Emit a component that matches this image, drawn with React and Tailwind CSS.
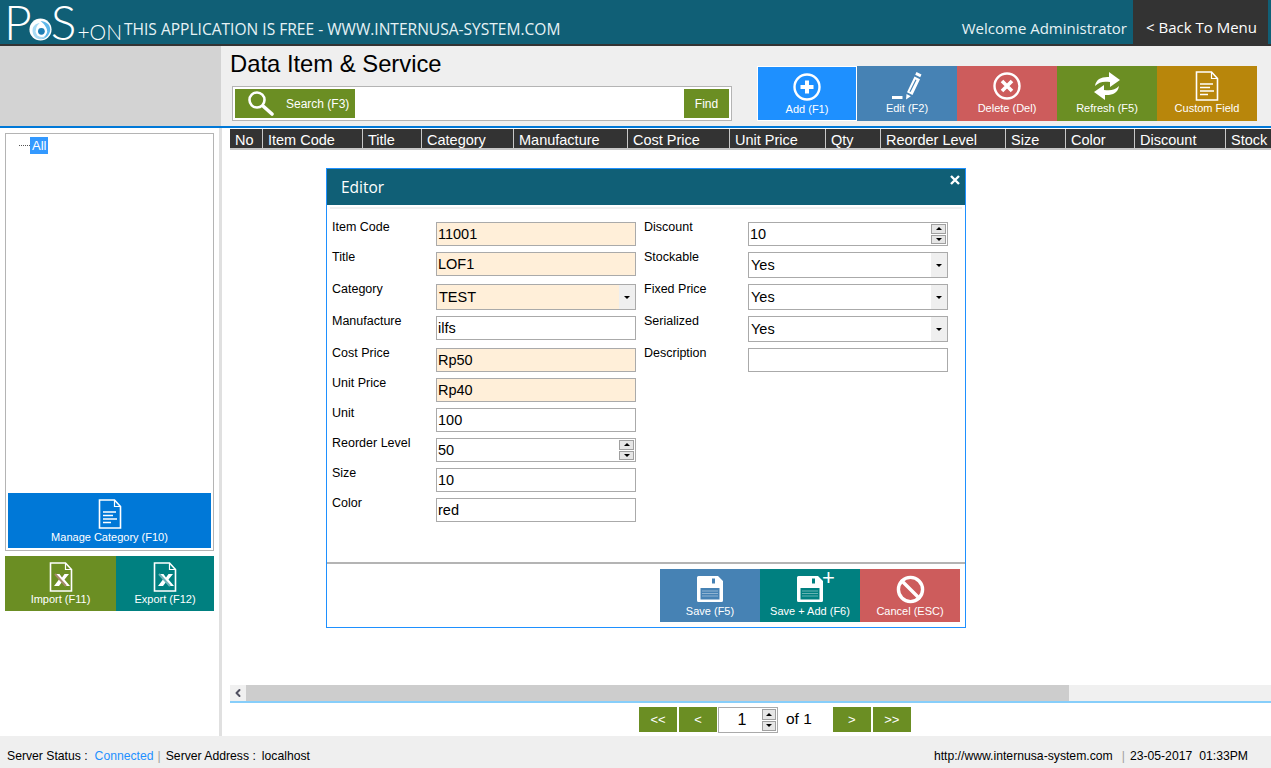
import { ChevronLeft, Ban } from "lucide-react";

const SANS = "font-['Liberation_Sans',Arial,sans-serif]";
const HEAD = "font-['Open_Sans',sans-serif]";

const COLUMNS = [
  { label: "No", w: "w-[33px]" },
  { label: "Item Code", w: "w-[100px]" },
  { label: "Title", w: "w-[59px]" },
  { label: "Category", w: "w-[92px]" },
  { label: "Manufacture", w: "w-[114px]" },
  { label: "Cost Price", w: "w-[102px]" },
  { label: "Unit Price", w: "w-[96px]" },
  { label: "Qty", w: "w-[55px]" },
  { label: "Reorder Level", w: "w-[125px]" },
  { label: "Size", w: "w-[60px]" },
  { label: "Color", w: "w-[69px]" },
  { label: "Discount", w: "w-[91px]" },
  { label: "Stock", w: "w-[46px]" },
];

function DocIcon({ className }) {
  return (
    <svg viewBox="0 0 24 30" className={className} fill="none" stroke="currentColor" strokeWidth="1.6">
      <path d="M1.500 1h15l6 6.500V29h-21z" />
      <path d="M16.500 1v6.500h6" strokeWidth="1.200" />
      <path d="M5 13h13M5 16.500h10M5 20h14M5 23.500h8" strokeWidth="1.700" />
    </svg>
  );
}

function ExcelIcon({ className, tint }) {
  return (
    <svg viewBox="0 0 24 30" className={className} fill="none" stroke="currentColor" strokeWidth="1.600">
      <path d="M1.500 1h15l6 6.500V29h-21z" />
      <path d="M16.500 1v6.500h6" strokeWidth="1.200" />
      <path d="M6 12h4.500l2.500 3.500 2.500-3.500H20l-4.500 5.500L21 24h-4.500L13 20l-3 4H5l5-6.500z" fill="currentColor" stroke="none" />
      <path d="M6 12l11 12" stroke={tint} strokeWidth="2" />
    </svg>
  );
}

function SearchIcon({ className }) {
  return (
    <svg viewBox="0 0 27 27" className={className} fill="none" stroke="currentColor">
      <circle cx="10" cy="10" r="7.500" strokeWidth="2.600" />
      <path d="M16 16l9 8" strokeWidth="3.600" strokeLinecap="round" />
    </svg>
  );
}

function PlusCircle({ className }) {
  return (
    <svg viewBox="0 0 28 28" className={className} fill="none" stroke="currentColor">
      <circle cx="14" cy="14" r="12.500" strokeWidth="2.400" />
      <path d="M14 7.500v13M7.500 14h13" strokeWidth="4" />
    </svg>
  );
}

function CrossCircle({ className }) {
  return (
    <svg viewBox="0 0 28 28" className={className} fill="none" stroke="currentColor">
      <circle cx="14" cy="14" r="12.500" strokeWidth="2.400" />
      <path d="M9 9l10 10M19 9L9 19" strokeWidth="3.600" />
    </svg>
  );
}

function PencilIcon({ className }) {
  return (
    <svg viewBox="0 0 30 28" className={className} fill="currentColor">
      <path d="M0 24h10.500v3H0z" />
      <path d="M24.500 0l5 2.500-1.300 2.800-5-2.500z" />
      <path fillRule="evenodd" d="M22.500 4.500l5.500 2.800L20.500 23 15 20.300zM23.500 7.500l-6 12 1 .5 6-12z" />
      <path d="M14.500 22l4.300 2.200-4.800 3.300z" />
    </svg>
  );
}

function RefreshIcon({ className }) {
  return (
    <svg viewBox="2 2 26 28" className={className} fill="currentColor">
      <path d="M3 16C4 9 10 6.500 17 7V2l11 8-10 7v-5C11 11 7 12 3 16z" />
      <path d="M27 16c-1 7-7 9.500-14 9v5L2 22l10-7v5c7 1 11 0 15-4z" />
    </svg>
  );
}

function FloppyIcon({ className, fill }) {
  return (
    <svg viewBox="0 0 26 26" className={className}>
      <path d="M1.500 0H21l5 5v19.500a1.500 1.500 0 0 1-1.500 1.500h-23A1.500 1.500 0 0 1 0 24.500v-23A1.500 1.500 0 0 1 1.500 0z" fill="currentColor" />
      <path d="M15 2.500h3v5h-3z" fill={fill} />
      <path d="M3.500 12h19v11.500h-19z" fill={fill} />
      <path d="M5 15h16M5 17.500h16M5 20h16" stroke="currentColor" strokeOpacity="0.4" strokeWidth="1.200" />
    </svg>
  );
}

function Logo() {
  return (
    <div className="flex items-end h-[44px] w-[124px] pl-[7px] font-['Lato',sans-serif] font-light text-white leading-none shrink-0">
      <span className="text-[48px] leading-[40px] mb-[2px] -ml-[3px] -mr-[2px]">P</span>
      <svg viewBox="0 0 26 26" className="w-[23px] h-[23px] mb-[3px] shrink-0 -ml-[1px] -mr-[1px]">
        <circle cx="13" cy="13" r="12.500" fill="#ffffff" />
        <path d="M13 3.500c6 0 11 4 11 9.500s-5 11-11 11c4-1.500 7-5 7-9.500S16.500 6 13 3.500z" fill="#5fb8ea" />
        <path d="M4 14C4 9 8 6 12 6c-3 2-4 4.500-3.500 7.500C9 19 14 22 19 21c-3 3-6.500 3.500-9 2.500C6 22 4 18 4 14z" fill="#a8dbf5" />
        <circle cx="14" cy="15" r="6.500" fill="#ffffff" />
        <circle cx="14" cy="15" r="3.800" fill="#1f7fb5" />
      </svg>
      <span className="text-[48px] leading-[40px] mb-[2px]">S</span>
      <span className="text-[21px] leading-[22px] mb-[1px] ml-[1px] whitespace-nowrap">+ON</span>
    </div>
  );
}

function ToolButton({ color, label, children, active }) {
  return (
    <button className={`w-[100px] h-[55px] flex flex-col items-center text-white text-[11px] ${SANS} ${color} ${active ? "border border-white" : ""}`}>
      <div className="h-[35px] flex items-center justify-center pt-[5px]">{children}</div>
      <span className="leading-[14px]">{label}</span>
    </button>
  );
}

function Row({ label, h, children }) {
  return (
    <div className={`flex items-start ${h}`}>
      <span className="w-[104px] text-[12.500px] leading-[13px] -mt-px text-black">{label}</span>
      {children}
    </div>
  );
}

function TextInput({ value, peach }) {
  return (
    <div className={`w-[200px] h-[24px] border border-[#aaaaaa] px-[1px] text-[14.500px] leading-[22px] text-black ${peach ? "bg-[#ffefd9]" : "bg-white"}`}>
      {value}
    </div>
  );
}

function Combo({ value, peach }) {
  return (
    <div className={`w-[200px] h-[26px] border border-[#aaaaaa] flex text-[14.500px] leading-[25px] text-black ${peach ? "bg-[#ffefd9]" : "bg-white"}`}>
      <span className="flex-1 pl-[2px]">{value}</span>
      <span className="w-[16px] bg-[#efefef] flex items-center justify-center">
        <span className="border-x-[3px] border-t-[3px] border-x-transparent border-t-black" />
      </span>
    </div>
  );
}

function Spinner({ size }) {
  return (
    <div className={`flex flex-col gap-px ${size}`}>
      <div className="flex-1 bg-[#e6e6e6] border border-[#a0a0a0] flex items-center justify-center">
        <span className="border-x-[3px] border-b-[3px] border-x-transparent border-b-black" />
      </div>
      <div className="flex-1 bg-[#e6e6e6] border border-[#a0a0a0] flex items-center justify-center">
        <span className="border-x-[3px] border-t-[3px] border-x-transparent border-t-black" />
      </div>
    </div>
  );
}

function SpinInput({ value }) {
  return (
    <div className="w-[200px] h-[24px] border border-[#aaaaaa] bg-white flex items-center pl-[1px] pr-[1px] text-[14.500px] leading-[22px] text-black">
      <span className="flex-1">{value}</span>
      <Spinner size="w-[15px] h-[20px]" />
    </div>
  );
}

function PageBtn({ children }) {
  return (
    <button className="w-[38px] h-[25px] bg-[#6b8e23] text-white text-[13px] leading-[25px]">{children}</button>
  );
}

function EditorModal() {
  return (
    <div className={`absolute left-[326px] top-[168px] w-[640px] h-[460px] bg-white border border-[#1e90ff] flex flex-col ${SANS}`}>
      <div className="h-[36px] bg-[#105f76] flex items-center justify-between pl-[14px] pr-[5px] pt-[1px] shrink-0">
        <span className={`text-white text-[15.500px] ${HEAD}`}>Editor</span>
        <svg viewBox="0 0 10 10" className="w-[10px] h-[10px] text-white -mt-[15px]" stroke="currentColor" strokeWidth="2.400">
          <path d="M1 1l8 8M9 1l-8 8" />
        </svg>
      </div>
      <div className="h-[2px] bg-[#f0f0f0] mt-[2px] mr-[3px] ml-[3px] shrink-0" />
      <div className="flex-1 flex pl-[5px] pt-[13px]">
        <div className="w-[312px] flex flex-col">
          <Row label="Item Code" h="h-[30px]"><TextInput value="11001" peach /></Row>
          <Row label="Title" h="h-[32px]"><TextInput value="LOF1" peach /></Row>
          <Row label="Category" h="h-[32px]"><Combo value="TEST" peach /></Row>
          <Row label="Manufacture" h="h-[32px]"><TextInput value="ilfs" /></Row>
          <Row label="Cost Price" h="h-[30px]"><TextInput value="Rp50" peach /></Row>
          <Row label="Unit Price" h="h-[30px]"><TextInput value="Rp40" peach /></Row>
          <Row label="Unit" h="h-[30px]"><TextInput value="100" /></Row>
          <Row label="Reorder Level" h="h-[30px]"><SpinInput value="50" /></Row>
          <Row label="Size" h="h-[30px]"><TextInput value="10" /></Row>
          <Row label="Color" h="h-[30px]"><TextInput value="red" /></Row>
        </div>
        <div className="flex flex-col">
          <Row label="Discount" h="h-[30px]"><SpinInput value="10" /></Row>
          <Row label="Stockable" h="h-[32px]"><Combo value="Yes" /></Row>
          <Row label="Fixed Price" h="h-[32px]"><Combo value="Yes" /></Row>
          <Row label="Serialized" h="h-[32px]"><Combo value="Yes" /></Row>
          <Row label="Description" h="h-[30px]"><TextInput value="" /></Row>
        </div>
      </div>
      <div className="h-[65px] border-t-2 border-[#b4b4b4] flex justify-end items-start pt-[5px] pr-[5px] shrink-0">
        <button className="w-[100px] h-[53px] bg-[#4682b4] text-white text-[11px] flex flex-col items-center pt-[7px]">
          <FloppyIcon className="w-[26px] h-[26px]" fill="#4682b4" />
          <span className="mt-[2px] leading-[14px]">Save (F5)</span>
        </button>
        <button className="w-[100px] h-[53px] bg-[#008080] text-white text-[11px] flex flex-col items-center pt-[7px] relative">
          <FloppyIcon className="w-[26px] h-[26px]" fill="#008080" />
          <span className="absolute left-[62px] top-[-3px] text-[22px] leading-[24px]">+</span>
          <span className="mt-[2px] leading-[14px]">Save + Add (F6)</span>
        </button>
        <button className="w-[100px] h-[53px] bg-[#cd5c5c] text-white text-[11px] flex flex-col items-center pt-[6px]">
          <Ban className="w-[29px] h-[29px]" strokeWidth={2.800} />
          <span className="leading-[14px]">Cancel (ESC)</span>
        </button>
      </div>
    </div>
  );
}

export default function App() {
  return (
    <div className={`relative w-[1271px] h-[768px] overflow-hidden bg-white flex flex-col text-black ${SANS}`}>
      {/* top bar */}
      <header className="h-[46px] bg-[#105f76] border-b-2 border-[#333333] flex items-stretch shrink-0 text-white">
        <Logo />
        <span className={`self-end mb-[5px] text-[15.550px] leading-[20px] text-[#e6f2f5] whitespace-nowrap ${HEAD}`}>
          THIS APPLICATION IS FREE - WWW.INTERNUSA-SYSTEM.COM
        </span>
        <span className={`ml-auto self-end mb-[6px] text-[15px] leading-[20px] text-[#e6f2f5] ${HEAD}`}>Welcome Administrator</span>
        <button className={`ml-[6px] mr-[3px] w-[135px] h-[44px] bg-[#333333] text-[15px] text-white pt-[9px] pl-[2px] leading-[20px] ${HEAD}`}>
          &lt; Back To Menu
        </button>
      </header>

      {/* sub header */}
      <div className="h-[82px] flex border-b-2 border-[#0078d7] shrink-0">
        <div className="w-[221px] bg-[#d3d3d3]" />
        <div className="flex-1 bg-[#efefef] flex justify-between pl-[9px] pr-[14px]">
          <div className="w-[502px]">
            <h1 className="text-[23.800px] leading-[28px] mt-[4px] font-normal text-black">Data Item &amp; Service</h1>
            <div className="mt-[8px] ml-[2px] w-[500px] h-[35px] bg-white border border-[#b4b4b4] flex items-center justify-between px-[2px]">
              <button className="w-[120px] h-[29px] bg-[#6b8e23] text-white text-[12px] flex items-center">
                <SearchIcon className="w-[27px] h-[27px] ml-[12px]" />
                <span className="ml-[12px] whitespace-nowrap">Search (F3)</span>
              </button>
              <button className="w-[45px] h-[29px] bg-[#6b8e23] text-white text-[12px]">Find</button>
            </div>
          </div>
          <div className="flex mt-[20px] h-[55px]">
            <ToolButton color="bg-[#1e90ff]" label="Add (F1)" active>
              <PlusCircle className="w-[28px] h-[28px]" />
            </ToolButton>
            <ToolButton color="bg-[#4682b4]" label="Edit (F2)">
              <PencilIcon className="w-[30px] h-[28px]" />
            </ToolButton>
            <ToolButton color="bg-[#cd5c5c]" label="Delete (Del)">
              <CrossCircle className="w-[28px] h-[28px]" />
            </ToolButton>
            <ToolButton color="bg-[#6b8e23]" label="Refresh (F5)">
              <RefreshIcon className="w-[26px] h-[30px]" />
            </ToolButton>
            <ToolButton color="bg-[#b8860b]" label="Custom Field">
              <DocIcon className="w-[24px] h-[30px]" />
            </ToolButton>
          </div>
        </div>
      </div>

      {/* body */}
      <div className="flex-1 flex min-h-0">
        <aside className="w-[222px] border-r-[3px] border-[#e0e0e0] pl-[5px] pt-[5px] shrink-0">
          <div className="w-[209px] h-[418px] border border-[#b4b4b4] flex flex-col justify-between p-[2px]">
            <div className="flex items-center pl-[11px] h-[18px]">
              <span className="w-[11px] border-t border-dotted border-[#555555]" />
              <span className="bg-[#3399ff] text-white text-[13px] leading-[17px] px-[2px]">All</span>
            </div>
            <button className="w-[203px] h-[55px] bg-[#0078d7] text-white text-[11px] flex flex-col items-center pt-[6px]">
              <DocIcon className="w-[24px] h-[30px]" />
              <span className="mt-[1px] leading-[14px]">Manage Category (F10)</span>
            </button>
          </div>
          <div className="flex mt-[5px] w-[209px] h-[55px]">
            <button className="w-[111px] bg-[#6b8e23] text-white text-[11px] flex flex-col items-center pt-[6px]">
              <ExcelIcon className="w-[24px] h-[30px]" tint="#a5886a" />
              <span className="leading-[14px]">Import (F11)</span>
            </button>
            <button className="w-[98px] bg-[#008080] text-white text-[11px] flex flex-col items-center pt-[6px]">
              <ExcelIcon className="w-[24px] h-[30px]" tint="#6fb3b8" />
              <span className="leading-[14px]">Export (F12)</span>
            </button>
          </div>
        </aside>

        <main className="flex-1 min-w-0 pl-[8px] flex flex-col overflow-hidden">
          <div className="flex-1 pt-[1px] overflow-hidden">
            <div className="flex h-[21px] w-max bg-[#333333] border-b-[2px] border-[#c8c8c8]">
              {COLUMNS.map((c) => (
                <div key={c.label} className={`${c.w} h-[20px] border-r border-[#c8c8c8] pl-[5px] text-white text-[14.500px] leading-[22px] whitespace-nowrap`}>
                  {c.label}
                </div>
              ))}
            </div>
          </div>
          {/* h scroll */}
          <div className="h-[16px] bg-[#f0f0f0] flex shrink-0">
            <div className="w-[16px] flex items-center justify-center">
              <ChevronLeft className="w-[12px] h-[12px] text-[#505060]" strokeWidth={4} />
            </div>
            <div className="w-[823px] bg-[#cdcdcd]" />
          </div>
          <div className="h-[35px] border-t-2 border-[#87cefa] flex items-start pt-[4px] pl-[409px] shrink-0">
            <PageBtn>&lt;&lt;</PageBtn>
            <div className="w-[2px]" />
            <PageBtn>&lt;</PageBtn>
            <div className="w-[60px] h-[26px] ml-px border border-[#aaaaaa] bg-white flex items-center pr-[1px]">
              <span className="flex-1 text-center text-[16px] leading-[20px] pl-[3px]">1</span>
              <Spinner size="w-[14px] h-[22px]" />
            </div>
            <span className="ml-[8px] text-[15.500px] leading-[24px]">of 1</span>
            <div className="ml-[21px]"><PageBtn>&gt;</PageBtn></div>
            <div className="w-[2px]" />
            <PageBtn>&gt;&gt;</PageBtn>
          </div>
        </main>
      </div>

      {/* status bar */}
      <footer className="h-[32px] bg-[#efefef] flex items-center pl-[7px] pr-[23px] pt-[8px] text-[12.200px] leading-[16px] shrink-0">
        <span>Server Status :</span>
        <span className="ml-[7px] text-[#1e90ff]">Connected</span>
        <span className="ml-[4px] text-[#a0a0a0]">|</span>
        <span className="ml-[5px]">Server Address :</span>
        <span className="ml-[6px]">localhost</span>
        <span className="ml-auto">http://www.internusa-system.com</span>
        <span className="ml-[9px] text-[#a0a0a0]">|</span>
        <span className="ml-[5px]">23-05-2017</span>
        <span className="ml-[7px]">01:33PM</span>
      </footer>

      <EditorModal />
    </div>
  );
}
